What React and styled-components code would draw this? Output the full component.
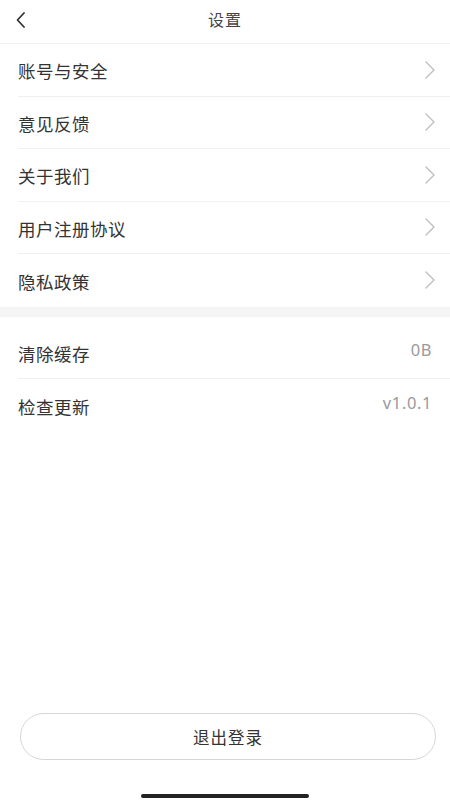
import React from 'react';
import styled, { createGlobalStyle } from 'styled-components';

const Global = createGlobalStyle`
  html, body {
    margin: 0;
    padding: 0;
    background: #ffffff;
  }
  body {
    font-family: "Noto Sans CJK SC", "Noto Sans", sans-serif;
    color: #333;
  }
`;

const Page = styled.div`
  width: 450px;
  height: 800px;
  display: flex;
  flex-direction: column;
  background: #fff;
  overflow: hidden;
`;

const Header = styled.div`
  height: 44px;
  flex-shrink: 0;
  display: grid;
  grid-template-columns: 60px 1fr 60px;
  align-items: center;
  border-bottom: 1px solid #f0f0f0;
  box-sizing: border-box;
`;

const Back = styled.button`
  border: 0;
  background: none;
  padding: 0 0 0 14px;
  height: 100%;
  display: flex;
  align-items: center;
  cursor: pointer;
  margin-top: -4px;
`;

const Title = styled.div`
  text-align: center;
  font-size: 16px;
  color: #444;
  letter-spacing: 1px;
  margin-top: -6px;
`;

const Group = styled.div`
  display: flex;
  flex-direction: column;
`;

const Row = styled.div`
  height: 52.5px;
  margin-left: 18px;
  padding-right: 14px;
  display: flex;
  align-items: center;
  justify-content: space-between;
  box-sizing: border-box;
  border-bottom: ${p => (p.$last ? 'none' : '1px solid #f0f0f0')};
`;

const Label = styled.span`
  font-size: 17.5px;
  color: #333;
  letter-spacing: 0.5px;
  margin-top: 2px;
`;

const Value = styled.span`
  font-family: "Noto Sans", "Open Sans", sans-serif;
  font-size: 16.5px;
  color: #9a9a9a;
  letter-spacing: 0.6px;
  margin-top: -5px;
  padding-right: 4px;
`;

const Gap = styled.div`
  height: 10px;
  background: #f5f5f5;
  margin: 0 0 10px;
`;

const Spacer = styled.div`
  flex: 1;
`;

const LogoutButton = styled.button`
  margin: 0 14px 0 20px;
  height: 47px;
  border: 1px solid #d6d6d6;
  border-radius: 24px;
  background: #fff;
  font-family: "Noto Sans CJK SC", sans-serif;
  font-size: 16.5px;
  color: #333;
  letter-spacing: 1px;
  cursor: pointer;
`;

const Indicator = styled.div`
  width: 168px;
  height: 4px;
  border-radius: 2px;
  background: #222;
  align-self: center;
  margin: 34px 0 2px;
`;

const Chevron = () => (
  <svg width="14" height="20" viewBox="0 0 14 20" fill="none">
    <path d="M4 2l8 8-8 8" stroke="#bdbdbd" strokeWidth="1.3" strokeLinecap="round" strokeLinejoin="round" />
  </svg>
);

const BackIcon = () => (
  <svg width="14" height="18" viewBox="0 0 14 18" fill="none">
    <path d="M10 2L3.5 9 10 16" stroke="#333" strokeWidth="1.8" strokeLinecap="round" strokeLinejoin="round" />
  </svg>
);

const links = ['账号与安全', '意见反馈', '关于我们', '用户注册协议', '隐私政策'];
const info = [
  { label: '清除缓存', value: '0B' },
  { label: '检查更新', value: 'v1.0.1' },
];

export default function App() {
  return (
    <>
      <Global />
      <Page>
        <Header>
          <Back aria-label="返回"><BackIcon /></Back>
          <Title>设置</Title>
          <span />
        </Header>
        <Group>
          {links.map((t, i) => (
            <Row key={t} $last={i === links.length - 1}>
              <Label>{t}</Label>
              <Chevron />
            </Row>
          ))}
        </Group>
        <Gap />
        <Group>
          {info.map((it, i) => (
            <Row key={it.label} $last={i === info.length - 1}>
              <Label>{it.label}</Label>
              <Value>{it.value}</Value>
            </Row>
          ))}
        </Group>
        <Spacer />
        <LogoutButton>退出登录</LogoutButton>
        <Indicator />
      </Page>
    </>
  );
}
